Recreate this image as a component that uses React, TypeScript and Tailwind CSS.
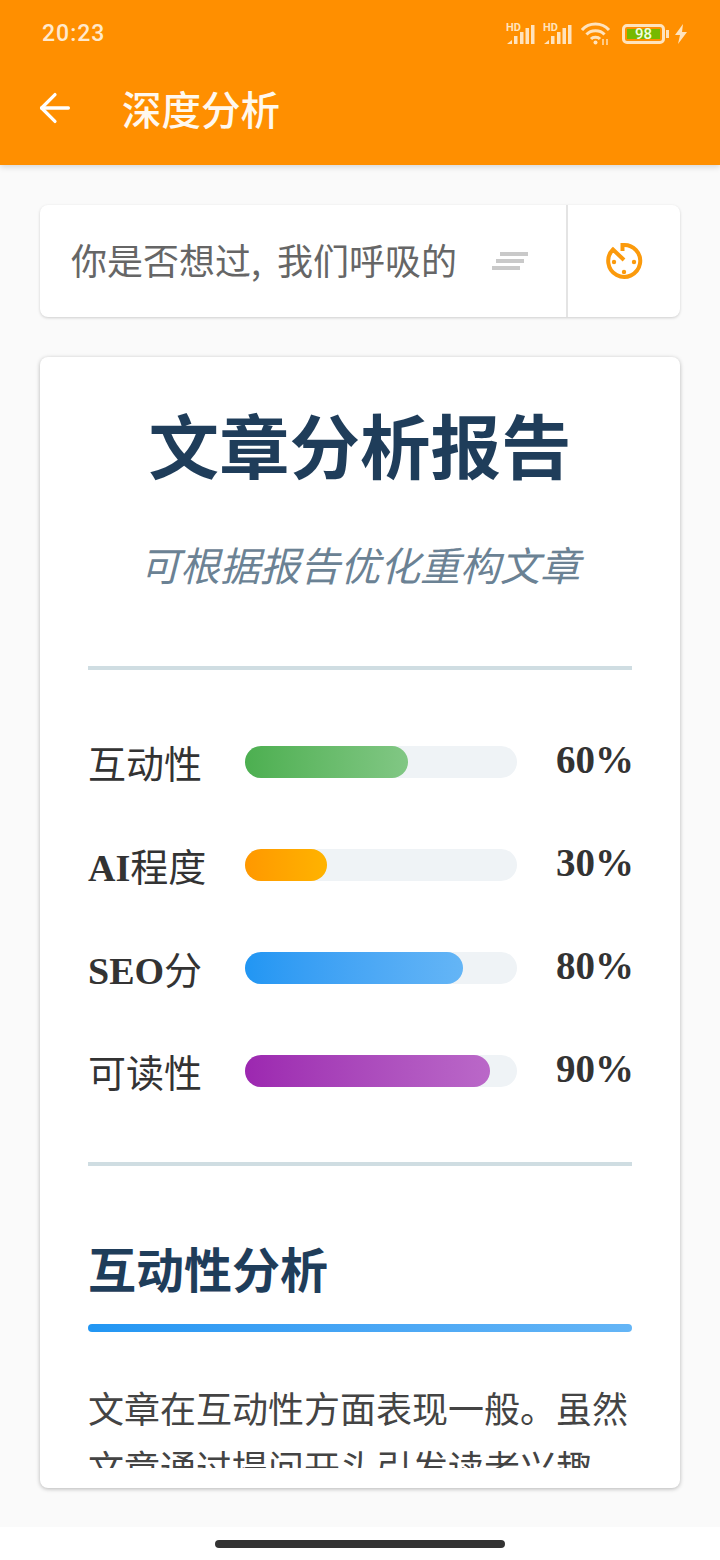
import { ArrowLeft } from "lucide-react";

const cjkSans = '"Noto Sans CJK SC", "Roboto", sans-serif';
const serif = '"Liberation Serif", "Noto Sans CJK SC", serif';

const metrics = [
  { latin: "", label: "互动性", value: 60, fill: "bg-gradient-to-r from-[#4caf50] to-[#81c784]" },
  { latin: "AI", label: "程度", value: 30, fill: "bg-gradient-to-r from-[#ff9800] to-[#ffb300]" },
  { latin: "SEO", label: "分", value: 80, fill: "bg-gradient-to-r from-[#2196f3] to-[#64b5f6]" },
  { latin: "", label: "可读性", value: 90, fill: "bg-gradient-to-r from-[#9c27b0] to-[#ba68c8]" },
];

function Signal() {
  return (
    <svg width="29" height="24" viewBox="0 0 29 24" fill="#ffe3bd">
      <text x="0" y="9" fontSize="11" fontWeight="700" fontFamily="Roboto, sans-serif">HD</text>
      <path d="M1 22 L6 18 V22 Z" />
      <rect x="8" y="14" width="3.5" height="8" />
      <rect x="14" y="10" width="3.5" height="12" />
      <rect x="19.5" y="6" width="3.5" height="16" />
      <rect x="25" y="3" width="3.5" height="19" />
    </svg>
  );
}

function StatusBar() {
  return (
    <div className="flex h-[66px] items-center justify-between pl-[42px] pr-[32px] pt-[2px]">
      <span className="font-['Roboto'] text-[23px] font-medium tracking-[1px] text-[#ffe9cc]">20:23</span>
      <div className="flex items-center">
        <Signal />
        <div className="w-[8px]" />
        <Signal />
        <svg className="ml-[9px]" width="30" height="24" viewBox="0 0 30 24" fill="none" stroke="#ffe3bd" strokeWidth="3">
          <path d="M1 8 C8 0 21 0 28 8" />
          <path d="M5.5 12.5 C10 7.5 19 7.5 23.5 12.5" />
          <path d="M10 17 C12 14.5 17 14.5 19 17" />
          <circle cx="14.5" cy="20.5" r="2" fill="#ffe3bd" stroke="none" />
          <path d="M22 17 V23 M26 17 V23" strokeWidth="1.4" />
        </svg>
        <div className="ml-[11px] flex h-[20px] w-[43px] items-center rounded-[5px] border-[3px] border-[#ffe3bd] px-[2px]">
          <div className="flex h-[10px] w-full items-center justify-center bg-[#76b900] font-['Roboto'] text-[15px] font-medium text-[#f3ffe0]">98</div>
        </div>
        <div className="ml-[1px] h-[8px] w-[3px] bg-[#ffe3bd]" />
        <svg className="ml-[5px]" width="14" height="20" viewBox="0 0 14 20" fill="#ffe3bd">
          <path d="M9 0 L1 11 H6 L4 20 L13 8 H8 Z" />
        </svg>
      </div>
    </div>
  );
}

function ClockIcon() {
  return (
    <svg width="38" height="38" viewBox="0 0 38 38" fill="none">
      <path d="M17.5 3 A16 16 0 1 1 8 7.5 L19 18" stroke="#fb9a0c" strokeWidth="4" />
      <path d="M17.5 1 V9" stroke="#fb9a0c" strokeWidth="4" />
      <circle cx="9" cy="20" r="2.2" fill="#fb9a0c" />
      <circle cx="29" cy="20" r="2.2" fill="#fb9a0c" />
      <circle cx="19" cy="30" r="2.2" fill="#fb9a0c" />
    </svg>
  );
}

function Divider() {
  return <div className="h-[4px] bg-[#cfdde2]" />;
}

export default function App() {
  return (
    <div className="flex h-[1560px] w-[720px] flex-col overflow-hidden bg-[#fafafa]" style={{ fontFamily: cjkSans }}>
      <header className="h-[165px] bg-[#ff8f00] shadow-[0_2px_6px_rgba(0,0,0,0.15)]">
        <StatusBar />
        <div className="flex h-[84px] items-center pl-[32px]">
          <ArrowLeft size={46} strokeWidth={1.7} className="text-white" />
          <h1 className="ml-[44px] text-[39.5px] font-medium text-[#fff8ee]">深度分析</h1>
        </div>
      </header>

      <main className="flex flex-1 flex-col gap-[40px] px-[40px] pt-[40px]">
        <div className="flex h-[112px] rounded-[8px] bg-white shadow-[0_1px_3px_rgba(0,0,0,0.18)]">
          <div className="flex flex-1 items-center justify-between border-r-[2px] border-[#e4e4e4] pl-[31px] pr-[38px]">
            <span className="pb-[4px] text-[36px] leading-[50px] text-[#666]">
              你是否想过<span className="mr-[8px]">, </span>我们呼吸的
            </span>
            <div className="flex flex-col gap-[3px]">
              <div className="ml-[8px] h-[4px] w-[28px] bg-[#c9c9c9]" />
              <div className="ml-[4px] h-[4px] w-[28px] bg-[#c9c9c9]" />
              <div className="h-[4px] w-[28px] bg-[#c9c9c9]" />
            </div>
          </div>
          <div className="flex w-[112px] items-center justify-center">
            <ClockIcon />
          </div>
        </div>

        <section className="flex h-[1131px] flex-col rounded-[8px] bg-white pb-[20px] shadow-[0_1px_4px_rgba(0,0,0,0.28)]">
          <div className="flex-1 overflow-hidden px-[48px]">
            <h2 className="mt-[41px] h-[90px] text-center text-[70.5px] font-bold leading-[90px] text-[#1f3d5a]">文章分析报告</h2>
            <p className="mt-[48px] text-center text-[40px] italic leading-[56px] text-[#6b8294]">可根据报告优化重构文章</p>
            <div className="mt-[74px]">
              <Divider />
            </div>
            <div className="mt-[61px] flex flex-col gap-[41px]">
              {metrics.map((m) => (
                <div key={m.label} className="flex h-[62px] items-center" style={{ fontFamily: serif }}>
                  <span className="w-[157px] pt-[6px] text-[38px] text-[#333]">
                    <b>{m.latin}</b>
                    {m.label}
                  </span>
                  <div className="h-[32px] w-[272px] rounded-full bg-[#eff3f6]">
                    <div className={`h-full rounded-full ${m.fill}`} style={{ width: `${m.value}%` }} />
                  </div>
                  <span className="-mr-[2px] flex-1 pb-[4px] text-right text-[39px] font-bold text-[#333]">{m.value}%</span>
                </div>
              ))}
            </div>
            <div className="mt-[60px]">
              <Divider />
            </div>
            <h3 className="mt-[66px] text-[48px] font-bold leading-[70px] text-[#1f3d5a]">互动性分析</h3>
            <div className="mt-[22px] h-[8px] rounded-full bg-gradient-to-r from-[#2196f3] to-[#64b5f6]" />
            <p className="mt-[46px] text-[36px] leading-[59px] text-[#444]">
              文章在互动性方面表现一般。虽然文章通过提问开头引发读者兴趣
            </p>
          </div>
        </section>
      </main>

      <footer className="flex h-[33px] justify-center bg-white pt-[13px]">
        <div className="h-[8px] w-[290px] rounded-full bg-[#333]" />
      </footer>
    </div>
  );
}
